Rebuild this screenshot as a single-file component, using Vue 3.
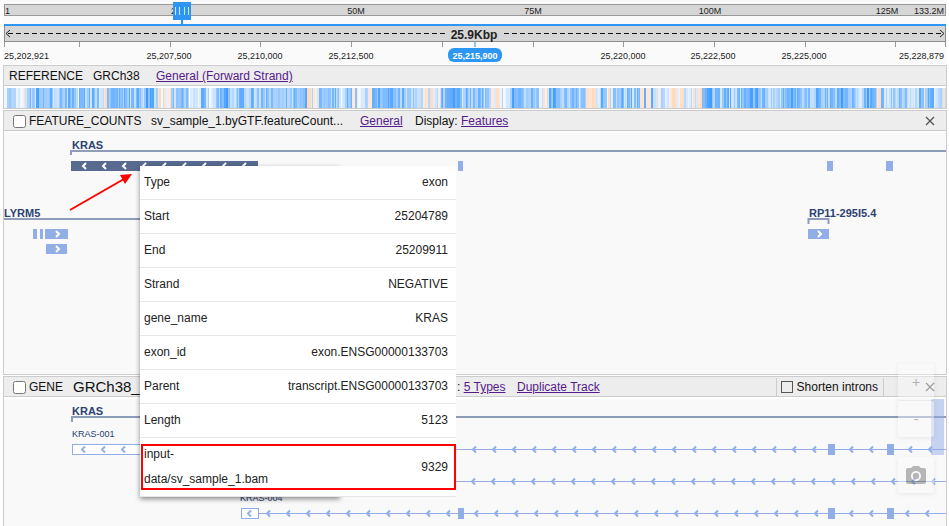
<script setup>
import { ref } from 'vue'

const trackOneOn = ref(false)
const trackTwoOn = ref(false)
const shorten = ref(false)

const chromosomeLabels = [
  { x: 171, text: '25M', anchor: 'start' },
  { x: 5, text: '1', anchor: 'start' },
  { x: 356, text: '50M', anchor: 'middle' },
  { x: 533, text: '75M', anchor: 'middle' },
  { x: 710, text: '100M', anchor: 'middle' },
  { x: 887, text: '125M', anchor: 'middle' },
  { x: 944, text: '133.2M', anchor: 'end' }
]

const ticks = [4, 79, 170, 260, 351, 442, 533, 623, 714, 805, 895, 945]

const positionLabels = [
  { x: 4, text: '25,202,921', anchor: 'start' },
  { x: 169, text: '25,207,500', anchor: 'middle' },
  { x: 260, text: '25,210,000', anchor: 'middle' },
  { x: 351, text: '25,212,500', anchor: 'middle' },
  { x: 623, text: '25,220,000', anchor: 'middle' },
  { x: 713, text: '25,222,500', anchor: 'middle' },
  { x: 804, text: '25,225,000', anchor: 'middle' },
  { x: 944, text: '25,228,879', anchor: 'end' }
]

// GC content strip: low values are warm, high values are blue
const warm = [[23, 24], [104, 105], [157, 159], [164, 165], [168, 170], [307, 310], [313, 316], [352, 354], [368, 371], [423, 426], [429, 431], [438, 439], [490, 493], [495, 498], [543, 545], [586, 590], [592, 595], [608, 609], [640, 642], [646, 650], [655, 656], [659, 660], [670, 676], [680, 683], [692, 694], [698, 701], [877, 879], [923, 924], [943, 944]]
const pale = [[4, 6], [15, 22], [25, 28], [54, 56], [76, 78], [153, 167], [189, 199], [206, 211], [309, 318], [340, 345], [356, 366], [415, 436], [494, 508], [538, 546], [596, 600], [606, 612], [655, 690], [772, 776], [855, 862], [884, 890], [910, 914], [934, 945]]
const deep = [[36, 46], [80, 81], [110, 118], [145, 152], [200, 203], [222, 226], [239, 241], [296, 305], [354, 355], [372, 380], [388, 398], [449, 460], [512, 522], [549, 558], [601, 605], [702, 712], [749, 759], [784, 792], [815, 818], [836, 846], [866, 870], [880, 883], [918, 922]]
const within = (list, x) => list.some(([a, b]) => x >= a && x <= b)

function buildStrip() {
  let seed = 4177
  const next = () => {
    seed = (seed * 1103515245 + 12345) % 2147483648
    return seed / 2147483648
  }
  const bars = []
  let x = 4
  while (x < 946) {
    const w = Math.min(next() < 0.5 ? 1 : 2, 946 - x)
    const n = next()
    let fill
    if (within(warm, x)) fill = `rgb(255, ${216 + Math.round(n * 20)}, ${184 + Math.round(n * 40)})`
    else {
      let v = 0.16 + n * 0.62
      if (within(deep, x)) v = 0.4 + n * 0.5
      else if (within(pale, x)) v = n * 0.4
      fill = `rgb(${Math.round(248 - v * 205)}, ${Math.round(250 - v * 105)}, 255)`
    }
    bars.push({ x, w, fill })
    x += w
  }
  return bars
}
const strip = buildStrip()

const run = (from, to) => {
  const out = []
  for (let x = from; x <= to; x += 20) out.push(x)
  return out
}
const left = (x, y) => `M${x + 2} ${y - 3}l-3 3l3 3`
const right = (x, y) => `M${x - 1} ${y - 3}l3 3l-3 3`
const many = (xs, y) => xs.map((x) => left(x, y)).join('')

const selectedArrows = many(run(84, 244), 166)
const forwardArrows = right(57, 234) + right(57, 249) + right(819, 234)
const transcriptArrows =
  many([...run(83, 243), ...run(274, 454), ...run(474, 814), 851, 871, 910, 930], 449.5) +
  many(run(473, 933), 481.5) +
  many([249, ...run(268, 448), ...run(476, 816), 851, 871, 907, 927], 513.5)

const details = [
  ['Type', 'exon'],
  ['Start', '25204789'],
  ['End', '25209911'],
  ['Strand', 'NEGATIVE'],
  ['gene_name', 'KRAS'],
  ['exon_id', 'exon.ENSG00000133703'],
  ['Parent', 'transcript.ENSG00000133703'],
  ['Length', '5123'],
  ['input-data/sv_sample_1.bam', '9329']
]
</script>

<template>
  <main class="browser">
    <svg class="ruler" viewBox="4 0 942 64">
      <rect class="bar" x="4.5" y="4.5" width="941" height="11" />
      <text v-for="l in chromosomeLabels" :key="l.text" class="small" :x="l.x" y="14" :text-anchor="l.anchor">{{ l.text }}</text>
      <path class="blue" d="M173 2h18v18h-8v4h-2v-4h-8z" />
      <path class="grip" d="M175.500 7v8M179.500 7v8M184.500 7v8M188.500 7v8" />
      <rect class="fill" x="4" y="26" width="942" height="15" />
      <rect class="blue" x="4" y="24" width="942" height="2" />
      <path class="edge" d="M4.500 26v21M4 41.500h942M945.500 26v21" />
      <path class="dash" d="M8 33.500H445M504 33.500H941" />
      <path class="tip" d="M10 30l-4 3.500l4 3.500M940 30l4 3.500l-4 3.500" />
      <text class="span" x="474" y="39" text-anchor="middle">25.9Kbp</text>
      <rect v-for="t in ticks" :key="t" class="tick" :x="t" y="42" width="1" height="5" />
      <rect class="cursor" x="474" y="42" width="2" height="5" />
      <text v-for="l in positionLabels" :key="l.text" class="small" :x="l.x" y="59" :text-anchor="l.anchor">{{ l.text }}</text>
      <rect class="blue" x="448" y="48" width="54" height="14" rx="6" />
      <text class="pill" x="475" y="59" text-anchor="middle">25,215,900</text>
    </svg>

    <section class="track">
      <header class="head">
        <span class="ref-name">REFERENCE</span>
        <span class="ref-build">GRCh38</span>
        <a href="#">General (Forward Strand)</a>
      </header>
      <svg class="drawing" viewBox="4 88 942 20" shape-rendering="crispEdges">
        <rect v-for="b in strip" :key="b.x" :x="b.x" y="88" :width="b.w" height="20" :fill="b.fill" />
      </svg>
    </section>

    <section class="track">
      <header class="head">
        <label class="kind wide"><input v-model="trackOneOn" type="checkbox" />FEATURE_COUNTS</label>
        <span class="file">sv_sample_1.byGTF.featureCount...</span>
        <a class="general" href="#">General</a>
        <span class="display">Display: <a href="#">Features</a></span>
        <button class="close" type="button" aria-label="Close">
          <svg width="10" height="10" viewBox="0 0 10 10"><path d="M1 1l8 8M9 1l-8 8" /></svg>
        </button>
      </header>
      <svg class="drawing" viewBox="4 133 942 241">
        <text class="gene" x="72" y="149">KRAS</text>
        <path class="gene-line" d="M946 151H71V155" />
        <rect class="selected" x="71" y="161" width="187" height="10" />
        <path class="white-arrow" :d="selectedArrows" />
        <path class="exon" d="M458 161h5v10h-5zM827 161h6v10h-6zM886 161h7v10h-7z" />
        <text class="gene" x="4" y="217">LYRM5</text>
        <path class="gene-line" d="M4 219H300" />
        <path class="exon" d="M33 229h4v10h-4zM40 229h3v10h-3zM45 229h23v10h-23zM46 244h21v10h-21zM808 229h21v10h-21z" />
        <path class="white-arrow" :d="forwardArrows" />
        <text class="gene" x="809" y="217">RP11-295I5.4</text>
        <path class="gene-line" d="M808.500 224V219H828.500V224" />
        <path class="pointer" d="M70 210L124 179" />
        <path class="pointer-head" d="M132 174l-12 1l5 9z" />
      </svg>
    </section>

    <section class="track last">
      <header class="head">
        <label class="kind"><input v-model="trackTwoOn" type="checkbox" />GENE</label>
        <span class="title">GRCh38_</span>
        <span class="types">: <a href="#">5 Types</a></span>
        <a href="#">Duplicate Track</a>
        <label class="shorten"><input v-model="shorten" type="checkbox" />Shorten introns</label>
        <button class="close" type="button" aria-label="Close">
          <svg width="10" height="10" viewBox="0 0 10 10"><path d="M1 1l8 8M9 1l-8 8" /></svg>
        </button>
      </header>
      <svg class="drawing" viewBox="4 399 942 127">
        <text class="gene" x="72" y="415">KRAS</text>
        <path class="gene-line" d="M946 417H72V422" />
        <text class="transcript" x="72" y="437">KRAS-001</text>
        <path class="intron" d="M258 449.500H946M258 481.500H946M259 513.500H946" />
        <rect class="utr" x="72.500" y="444.500" width="186" height="10" />
        <text class="transcript" x="240" y="501">KRAS-004</text>
        <rect class="utr" x="241.500" y="508.500" width="17" height="10" />
        <path class="blue-arrow" :d="transcriptArrows" />
        <path class="exon" d="M828 444h7v11h-7zM887 444h7v11h-7zM458 508h6v11h-6zM828 508h7v11h-7zM887 508h7v11h-7z" />
        <rect class="viewport" x="931" y="399" width="13" height="56" />
      </svg>
    </section>

    <div class="popup">
      <table>
        <tbody>
          <tr v-for="[name, value] in details" :key="name">
            <th scope="row">{{ name }}</th>
            <td>{{ value }}</td>
          </tr>
        </tbody>
      </table>
      <div class="highlight"></div>
    </div>

    <div class="tools">
      <button type="button">+</button>
      <button type="button">-</button>
      <button class="camera" type="button" aria-label="Screenshot">
        <svg width="20" height="18" viewBox="2 2 20 18">
          <circle cx="12" cy="12" r="3.200" />
          <path d="M9 2L7.170 4H4c-1.100 0-2 .9-2 2v12c0 1.100.9 2 2 2h16c1.100 0 2-.9 2-2V6c0-1.100-.9-2-2-2h-3.170L15 2H9zm3 15c-2.760 0-5-2.240-5-5s2.240-5 5-5 5 2.240 5 5-2.240 5-5 5z" />
        </svg>
      </button>
    </div>
  </main>
</template>

<style>
body {
  margin: 0;
  background: #fff;
}
</style>

<style scoped>
.browser {
  position: relative;
  overflow: hidden;
  padding: 0 2px 0 3px;
  font: 12px/18px "Liberation Sans", Arial, sans-serif;
  color: #111;
}
svg {
  display: block;
}
.ruler {
  box-sizing: border-box;
  width: 100%;
  padding: 0 1px;
  margin-bottom: 1px;
  background: #fafafa;
}
.bar {
  fill: #d6d6d6;
  stroke: #999;
}
.fill {
  fill: #d6d6d6;
}
.blue {
  fill: #2c96f2;
}
.grip {
  stroke: #cfe6fc;
}
.edge {
  fill: none;
  stroke: #8c8c8c;
}
.tick {
  fill: #999;
}
.cursor {
  fill: #8cc5f8;
}
.dash {
  stroke: #111;
  stroke-dasharray: 5 3;
}
.tip {
  fill: none;
  stroke: #222;
}
.small {
  font-size: 9px;
  fill: #222;
}
.span {
  font-size: 12px;
  font-weight: bold;
  fill: #222;
}
.pill {
  font-size: 9px;
  font-weight: bold;
  fill: #fff;
}
.track {
  border: 1px solid #ccc;
  margin-bottom: 1px;
  background: #fff;
}
.track.last {
  border-bottom: 0;
  margin-bottom: 0;
}
.head {
  display: flex;
  align-items: center;
  height: 18px;
  margin-bottom: 2px;
  padding-top: 1px;
  padding-left: 5px;
  border-bottom: 1px solid #ccc;
  background: #ededed;
  white-space: nowrap;
}
a {
  color: #551a8b;
  text-decoration: underline;
}
.ref-name {
  width: 84px;
}
.ref-build {
  width: 63px;
}
.kind {
  display: flex;
  align-items: center;
  gap: 3px;
  width: 60px;
  padding-left: 4px;
}
.kind.wide {
  width: 138px;
}
.kind input {
  width: 13px;
  height: 13px;
  margin: 0;
}
.file {
  width: 209px;
}
.general {
  width: 55px;
}
.title {
  width: 384px;
  font-size: 15px;
}
.types {
  width: 60px;
}
.shorten {
  display: flex;
  align-items: center;
  gap: 4px;
  margin-left: auto;
  padding: 0 5px 0 4px;
  border: solid #ccc;
  border-width: 0 1px;
}
.shorten input {
  appearance: none;
  width: 12px;
  height: 12px;
  margin: 0;
  border: 1px solid #555;
}
.close {
  display: grid;
  place-items: center;
  width: 30px;
  height: 18px;
  margin: 0 1px 0 auto;
  padding: 0;
  border: 0;
  background: none;
}
.shorten + .close {
  margin-left: 31px;
}
.close path {
  fill: none;
  stroke: #555;
  stroke-width: 1.3;
}
.drawing {
  width: 100%;
  background: #f9f9f9;
}
.gene {
  font-size: 11px;
  font-weight: bold;
  fill: #2b4272;
}
.transcript {
  font-size: 9px;
  fill: #2b4272;
}
.gene-line {
  fill: none;
  stroke: #8e9bb9;
  stroke-width: 2;
}
.selected {
  fill: #586a90;
}
.exon {
  fill: #92aee7;
}
.white-arrow,
.blue-arrow {
  fill: none;
  stroke: #fff;
  stroke-width: 2;
}
.blue-arrow {
  stroke: #92aee7;
}
.intron {
  stroke: #92aee7;
}
.utr {
  fill: #fff;
  stroke: #92aee7;
}
.viewport {
  fill: #92aee7;
  opacity: 0.5;
}
.pointer {
  stroke: #f00;
  stroke-width: 2;
}
.pointer-head {
  fill: #f00;
}
.popup {
  position: absolute;
  top: 166px;
  left: 140px;
  width: 200px;
  box-shadow: 0 2px 5px rgba(0, 0, 0, 0.45);
}
table {
  width: 316px;
  border-collapse: collapse;
  background: #fff;
  line-height: 25px;
  color: #222;
}
th,
td {
  padding: 4px 8px 4px 4px;
  border-bottom: 1px solid #e6e6e6;
  font-weight: normal;
  text-align: left;
}
th {
  max-width: 128px;
}
td {
  text-align: right;
}
.highlight {
  position: absolute;
  left: 1px;
  bottom: 7px;
  box-sizing: border-box;
  width: 315px;
  height: 46px;
  border: 2px solid #f00;
}
.tools {
  position: absolute;
  top: 364px;
  right: 15px;
  display: grid;
  gap: 1px;
  opacity: 0.45;
}
.tools button {
  display: grid;
  place-items: center;
  width: 36px;
  height: 36px;
  padding: 0;
  border: 0;
  border-radius: 2px;
  background: #fafafa;
  box-shadow: 0 1px 4px rgba(0, 0, 0, 0.15);
  font: 14px "Liberation Sans", Arial, sans-serif;
  color: #666;
}
.tools .camera {
  margin-top: 19px;
}
.camera svg {
  fill: #666;
}
</style>
